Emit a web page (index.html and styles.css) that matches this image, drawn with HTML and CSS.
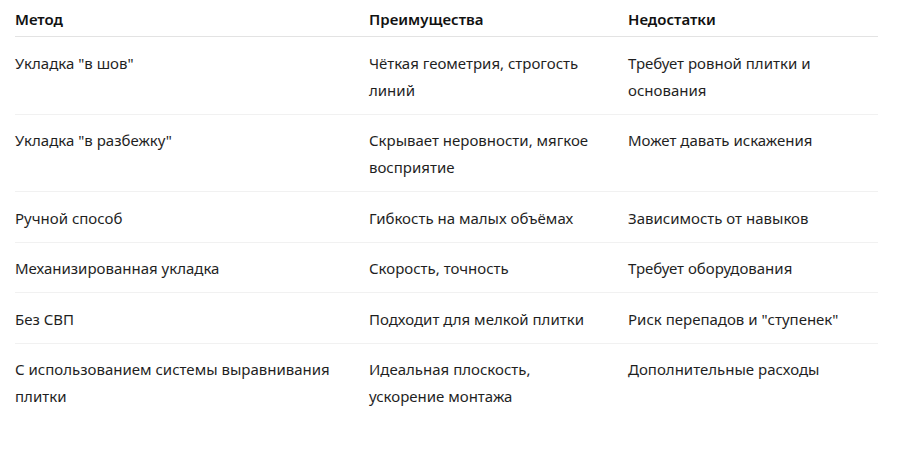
FILE: index.html
```html
<!DOCTYPE html>
<html lang="ru">
<head>
<meta charset="utf-8">
<title>Методы укладки</title>
<link rel="stylesheet" href="styles.css">
</head>
<body>
<div class="wrap">
<table class="cmp">
<colgroup><col class="c1"><col class="c2"><col class="c3"></colgroup>
<thead>
<tr><th>Метод</th><th>Преимущества</th><th>Недостатки</th></tr>
</thead>
<tbody>
<tr><td>Укладка "в шов"</td><td>Чёткая геометрия, строгость линий</td><td>Требует ровной плитки и основания</td></tr>
<tr><td>Укладка "в разбежку"</td><td>Скрывает неровности, мягкое восприятие</td><td>Может давать искажения</td></tr>
<tr><td>Ручной способ</td><td>Гибкость на малых объёмах</td><td>Зависимость от навыков</td></tr>
<tr><td>Механизированная укладка</td><td>Скорость, точность</td><td>Требует оборудования</td></tr>
<tr><td>Без СВП</td><td>Подходит для мелкой плитки</td><td>Риск перепадов и "ступенек"</td></tr>
<tr><td>С использованием системы выравнивания плитки</td><td>Идеальная плоскость, ускорение монтажа</td><td>Дополнительные расходы</td></tr>
</tbody>
</table>
</div>
</body>
</html>
```
FILE: styles.css
```css
html, body {
  margin: 0;
  padding: 0;
  background: #ffffff;
}
body {
  font-family: "Noto Sans", "Open Sans", sans-serif;
  font-size: 15px;
  color: #1f1f1f;
}
.wrap {
  padding: 0 23px 0 15px;
}
.cmp {
  width: 863px;
  table-layout: fixed;
  border-collapse: collapse;
}
.c1 { width: 354px; }
.c2 { width: 259px; }
.c3 { width: 250px; }
.cmp th, .cmp td {
  text-align: left;
  vertical-align: top;
  line-height: 27px;
  padding: 0 32px 0 0;
}
.cmp th {
  font-weight: 600;
  color: #111111;
  padding-top: 6px;
  padding-bottom: 3px;
  border-bottom: 1px solid #e3e3e3;
}
.cmp td {
  padding-top: 12.5px;
  padding-bottom: 10px;
  border-bottom: 1px solid #f1f1f1;
}
.cmp tbody tr:last-child td {
  border-bottom: none;
}
```
